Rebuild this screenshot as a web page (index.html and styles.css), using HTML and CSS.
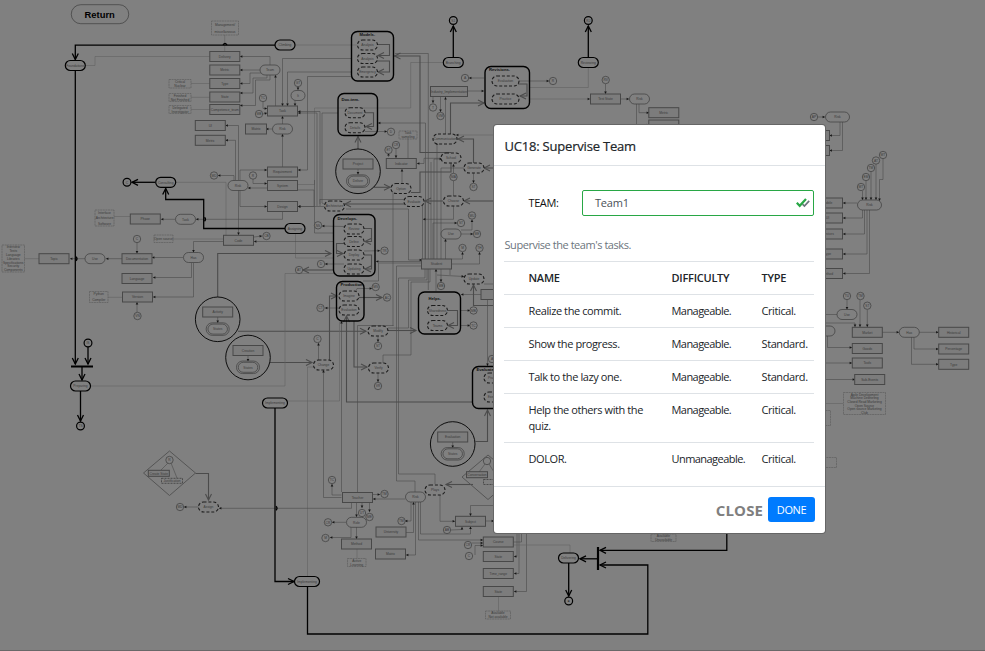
FILE: index.html
```html
<!DOCTYPE html>
<html lang="en">
<head>
<meta charset="utf-8">
<title>UC18: Supervise Team</title>
<link rel="stylesheet" href="styles.css">
</head>
<body>
<svg class="diagram" id="diagram" width="985" height="651" viewBox="0 0 985 651"></svg>
<main class="overlay">
  <section class="modal">
    <header class="modal-header"><h1>UC18: Supervise Team</h1></header>
    <div class="modal-body">
      <div class="field">
        <span class="field-label">TEAM:</span>
        <div class="field-input"><span>Team1</span>
          <svg class="checks" width="14" height="10" viewBox="0 0 14 10"><path d="M6.5 6.2 8.4 8l4.8-5.2" fill="none" stroke="#6c757d" stroke-width="1.7"/><path d="M.8 4.8 3.7 7.8 10 1" fill="none" stroke="#28a745" stroke-width="2.2"/></svg>
        </div>
      </div>
      <p class="hint">Supervise the team's tasks.</p>
      <table class="tasks">
        <colgroup><col class="col-name"><col class="col-diff"><col></colgroup>
        <thead><tr><th>NAME</th><th>DIFFICULTY</th><th>TYPE</th></tr></thead>
        <tbody>
          <tr><td>Realize the commit.</td><td>Manageable.</td><td>Critical.</td></tr>
          <tr><td>Show the progress.</td><td>Manageable.</td><td>Standard.</td></tr>
          <tr><td>Talk to the lazy one.</td><td>Manageable.</td><td>Standard.</td></tr>
          <tr><td>Help the others with the<br>quiz.</td><td>Manageable.</td><td>Critical.</td></tr>
          <tr><td>DOLOR.</td><td>Unmanageable.</td><td>Critical.</td></tr>
        </tbody>
      </table>
    </div>
    <footer class="modal-footer"><span class="close">CLOSE</span><span class="done">DONE</span></footer>
  </section>
</main>
<script src="diagram.js"></script>
</body>
</html>
```
FILE: styles.css
```css
* { box-sizing: border-box; }
body { margin: 0; width: 985px; height: 651px; overflow: hidden; background: #808080; font-family: "Open Sans", "Noto Sans", sans-serif; }
.diagram { position: absolute; left: 0; top: 0; }
.diagram text { font-family: "Liberation Sans", sans-serif; font-size: 3.3px; fill: #3a3a3a; text-anchor: middle; }
.diagram text.head { font-size: 4.2px; font-weight: bold; fill: #111; text-anchor: start; }
.diagram text.return { font-size: 9.4px; font-weight: bold; fill: #000; }
.box { fill: #7c7c7c; stroke: #484848; stroke-width: 1; }
.pill { fill: #808080; stroke: #3c3c3c; stroke-width: .7; }
.start { fill: #808080; stroke: #000; stroke-width: 1.2; }
.dash { fill: #808080; stroke: #1c1c1c; stroke-width: 1.1; stroke-dasharray: 3 1.9; }
.fine { fill: none; stroke: #333; stroke-width: .7; stroke-dasharray: 2 1; }
.note { fill: none; stroke: #595959; stroke-width: .6; stroke-dasharray: 2 .6; }
.group { fill: none; stroke: #000; stroke-width: 1.4; }
.ring { fill: none; stroke: #000; stroke-width: .9; }
.diamond { fill: none; stroke: #555; stroke-width: 1; }
.wire { fill: none; stroke: #4a4a4a; stroke-width: .6; }
.faint { fill: none; stroke: #626262; stroke-width: .6; }
.mid { fill: none; stroke: #4b4b4b; stroke-width: 1.1; }
.bold { fill: none; stroke: #000; stroke-width: 1.3; }
.tip { fill: #151515; }
.edge { fill: none; stroke: #686868; stroke-width: 1; }

.overlay { position: relative; display: flex; justify-content: flex-end; padding: 125px 160px 0 0; }
.modal { width: 331px; height: 408px; background: #fff; border-radius: 3px; box-shadow: 0 0 0 1px #666; display: flex; flex-direction: column; color: #212529; font-size: 11px; }
.modal-header { height: 41px; padding: 0 10.5px; display: flex; align-items: center; border-bottom: 1px solid #dee2e6; }
.modal-header h1 { margin: 0 0 -1px; font-size: 13px; line-height: 20px; font-weight: 400; letter-spacing: -.2px; -webkit-text-stroke: .2px #212529; }
.modal-body { height: 321px; padding: 24px 11px 0 10px; border-bottom: 1px solid #dee2e6; letter-spacing: -.4px; }
.field { display: flex; align-items: center; height: 26px; padding-left: 24.5px; }
.field-label { width: 53.5px; margin-top: -1px; color: #111; }
.field-input { flex: 1; height: 26px; display: flex; justify-content: space-between; align-items: center; border: 1px solid #28a745; border-radius: 2px; padding: 0 3px 1px 12px; color: #495057; letter-spacing: -.2px; }
.hint { margin: 21px 0 8px; line-height: 16px; color: #6c757d; padding-left: .5px; letter-spacing: -.45px; }
.tasks { width: 310px; table-layout: fixed; border-collapse: collapse; }
.col-name { width: 159px; }
.col-diff { width: 90px; }
.tasks th, .tasks td { border-top: 1px solid #dee2e6; padding: 8px 0 8px 8.5px; line-height: 16px; text-align: left; vertical-align: top; white-space: nowrap; }
.tasks td:nth-child(2) { letter-spacing: -.55px; }
.tasks th { font-weight: 600; letter-spacing: -.25px; }
.tasks th:first-child, .tasks td:first-child { padding-left: 24.5px; }
.modal-footer { flex: 1; display: flex; justify-content: flex-end; align-items: center; gap: 5px; padding: 0 10px 1px 0; }
.close { font-size: 15px; font-weight: 700; line-height: 20px; color: #7f7f7f; letter-spacing: .1px; }
.done { width: 47px; height: 25px; border-radius: 3px; background: #007bff; color: #fff; text-align: center; line-height: 25px; letter-spacing: -.4px; }
```
FILE: diagram.js
```js
const svg = document.getElementById('diagram');
const NS = 'http://www.w3.org/2000/svg';

function add(tag, attrs, text) {
  const el = document.createElementNS(NS, tag);
  for (const k in attrs) el.setAttribute(k, attrs[k]);
  if (text) el.textContent = text;
  svg.appendChild(el);
}
function label(x, y, t) { if (t) add('text', { x, y: y + 1.2 }, t); }
function rect(cls, cx, cy, w, h, rx, t) {
  add('rect', { class: cls, x: cx - w / 2, y: cy - h / 2, width: w, height: h, rx });
  label(cx, cy, t);
}

// Wire: class, end marker ('s' small, 'o' open, '' none), then x,y pairs
function wire(cls, end, ...p) {
  let d = 'M' + p[0] + ' ' + p[1];
  for (let i = 2; i < p.length; i += 2) d += 'L' + p[i] + ' ' + p[i + 1];
  add('path', { class: cls, d });
  if (!end) return;
  const n = p.length, x = p[n - 2], y = p[n - 1];
  const a = Math.atan2(y - p[n - 3], x - p[n - 4]) * 180 / Math.PI;
  const transform = `translate(${x} ${y}) rotate(${a})`;
  if (end === 's') add('path', { class: 'tip', d: 'M0 0L-2.4-1.3V1.3Z', transform });
  else add('path', { class: cls, d: 'M-6-3L0 0L-6 3', transform });
}

const wires = [
  // upper left
  'faint||224.7 35 224.7 51', 'faint||86 65.5 95 65.5 95 56.5 210 56.5', 'faint||191 83.5 210 83.5', 'faint||191 97.3 210 97.3', 'faint||191 109.5 210 109.5',
  'wire|s|270 65 270 56.5 240 56.5', 'wire|s|260 70 240 70', 'wire|s|263 73 250 73 250 83.5 240 83.5', 'wire|s|267 75 267 78 253 78 253 93 240 93', 'wire|s|270 75 270 80 255.5 80 255.5 105.5 240 105.5',
  'wire|s|275.5 106 275.5 75', 'wire|s|351 58.5 282.5 58.5 282.5 106', 'wire|s|351 72 287.5 72 287.5 106', 'wire|s|351 76.5 307.5 76.5 307.5 170 298 170',
  'faint||295 45 357 45', 'wire|s|298 87 298 90', 'wire|s|295 100 295 106', 'wire|s|263 102 263 108.5 267 108.5', 'wire|s|263 114 267 113', 'wire|s|272 129 266 129', 'wire|s|282.5 124 282.5 116', 'wire|s|282.5 167 282.5 134',
  'wire|s|238.5 180 238.5 125.5 225.5 125.5', 'wire|s|235.5 180 235.5 140.3 225.5 140.3', 'wire|s|234 181 234 175.5 218 175.5', 'wire|s|240 180 240 170 267 170', 'wire|s|267 188 248 188', 'wire|s|253 179 253 183.5 267 183.5', 'wire|s|240 190 240 206.5 267 206.5', 'faint||176 182.3 226 182.3 226 236', 'wire|s|238.5 190 238.5 235',
  'faint||114 216.5 130 216.5', 'wire|s|175 219.3 161 219.3', 'wire|s|282.5 212 282.5 219.3 196 219.3',
  // center top
  'faint||444 62.5 410.7 62.5 410.7 108 314.5 108 314.5 184.5 298 184.5', 'wire||338 113 322 113 322 203 324 204', 'wire|s|320 206 320 111.5 298 111.5', 'wire|s|317 206 317 113 298 113', 'wire||314.5 180 314.5 233 333 233', 'wire|s|324 206.5 298 206.5', 'wire|s|267 190 314 190 314 206.5 298 206.5', 'wire||320 204 319.8 199.5 405 199.5',
  'mid|o|377 44.5 389.5 44.5 389.5 55.5 378 55.5', 'mid|o|377 61 389.5 61 389.5 72 378 72', 'mid|o|365 112.7 373.5 112.7 373.5 126.5 366 126.5', 'wire|s|365 131.5 387 131.5', 'mid|o|358 149 358 136.5', 'wire|s|358 169 358 174.5',
  'mid|o|451 152.5 420 152.5 420 56 394.5 56', 'wire||428.3 290 428.3 53.5 395 53.5', 'wire|s|425.5 264 425.5 123 378 123', 'mid|o|374 187.3 390 187.3', 'wire|s|396 149 396 158', 'wire|s|388.5 157 388.5 153', 'wire||408 139 408 158', 'wire|s|402 183 402 169', 'wire|s|443 158.3 424 158.3 424 163.5 417 163.5', 'mid||411 192.5 420 192.5 420 172 451 172 451 163', 'mid|o|450.5 134 450.5 103 484 103', 'wire|s|445.5 134 445.5 97', 'wire|s|468 91 484 91', 'wire|s|484 78 469 78', 'wire|s|433 97 433 103', 'wire|s|440.5 97 440.5 112', 'mid|o|473.5 163 473.5 139 458 139', 'faint|s|494 135 456 135', 'mid|o|494 168 484 168', 'wire|s|473.5 172 473.5 183', 'wire|s|453.5 197 453.5 164', 'mid|o|494 201 464 201', 'mid|o|443 201 425 201', 'mid|o|404 204 345 204',
  'mid|o|518 84 527 84 527 96 520 96', 'wire|s|519 81 549 81', 'faint||530 87.5 588.3 87.5 588.3 67', 'faint|s|530 99 590 99', 'wire|s|605.5 84 605.5 94', 'wire|s|620 99 629 99', 'wire|s|639 104 639 112.7 649 112.7', 'wire|s|636.5 104 636.5 125 649 125',
  // cables around the student box
  'wire||422.5 259 422.5 205', 'wire||425 259 425 200', 'wire||431 259 431 162', 'wire|s|434 259 434 159 442 159', 'wire|s|437 259 437 142', 'wire||441 259 441 168 464 168', 'wire|s|346 209 408.5 209 408.5 260 422 260', 'wire||393 192 393 326', 'wire|s|453.5 206 453.5 219.3 423 219.3', 'wire||433 259 433 223', 'wire|s|433 223 457 223', 'wire|s|461 234 473 234', 'wire|s|461 230 472 230 472 219.5', 'wire|s|445.5 259 445.5 239', 'wire|s|452 259 462.5 259 462.5 252', 'wire|s|452 264 479.5 264 479.5 252', 'wire|s|422 261.5 376 261.5', 'wire|s|436 291 436 269', 'wire|s|437 275 464 276.5', 'wire|s|441 269 441 282', 'wire||430 269 430 282 411 282 411 355 383 355 383 363', 'wire||427 269 427 280 408.5 280 408.5 328 388 328', 'wire||425 269 425 278 398.5 278 398.5 474 435 474 435 484', 'wire||422 266 396.5 266 396.5 481 415 481 415 492', 'wire||363 281 378.5 281 378.5 263 422 263', 'mid|o|494 305.5 473.5 305.5 473.5 285', 'wire|s|481 294.5 461 294.5', 'wire|s|487.5 300 487.5 366', 'wire||484 284 494 284', 'wire||450 275 450 264', 'wire|s|460 310.5 470 310.5', 'wire|s|460 325.5 470 325.5', 'mid|o|448 310.5 457.5 310.5 457.5 325.5 448 325.5',
  // center column
  'faint||295.5 233 295.5 258 333 258', 'wire|s|333 241.5 254 241.5', 'mid|o|217.7 297 217.7 253.5 331 253.5', 'wire|s|254 237 262 236', 'wire|s|344 226.5 322 226', 'wire|s|344 264 325 264', 'mid|o|333 270 303 270', 'mid|o|364 228.5 371.5 228.5 371.5 241.5 365 241.5', 'mid|o|344 243.5 336.5 243.5 336.5 253.5 343 253.5', 'mid|o|364 255 371.5 255 371.5 269 365 269', 'wire|s|364 251 380 250.7', 'wire|s|356 291 357 288.5 372 288.5', 'mid|o|359 297.5 382 297.5', 'wire|s|340 308 325 308', 'mid|o|329.5 360 329.5 296 337 296', 'mid|o|238 331.3 366 331.3', 'mid|o|388 330.5 416 330.5', 'wire|s|378 336 378 342', 'wire|s|378 373 378 382', 'mid|o|354 321 354 367 367 367', 'mid|o|473 402 346.5 402 346.5 316', 'wire|s|318.5 360 318.5 343', 'mid|o|270 362.5 312 362.5', 'faint||91 386 285 386 285 273.5 334 273.5', 'wire|s|341.5 492 341.5 321', 'wire||357.5 492 357.5 325.5 393.5 325.5', 'faint||288 401 339.5 401 339.5 322', 'faint||307.5 576 307.5 367 314 367', 'wire|s|341.5 497.5 323.5 497.5 323.5 370', 'wire|s|351.5 502 351.5 508.3 219 508.3',
  // left
  'faint||24.5 258.7 39 258.7', 'wire|s|85 258.7 70 258.7', 'wire|s|122 258.7 106 258.7', 'wire|s|183 257.5 152 257.5', 'wire|s|223 241.5 193.5 241.5 193.5 252.5', 'faint||173 239 223 239', 'wire|s|137 243 137 253.5', 'wire|s|191.5 263 191.5 277.5 153 277.5', 'wire|s|193.5 263 193.5 297 153 297', 'faint||108 297.3 122 297.3', 'wire|s|137 312 137 302', 'wire|s|217.7 317 217.7 323', 'wire|s|248 355 248 361.5', 'wire|s|199 507 184 507', 'mid|o|195.5 473.5 208.5 473.5 208.5 500', 'wire||168 463 161 470', 'wire||171 463 177 478',
  // bottom center
  'wire|s|341.5 495 332 495 332 484', 'wire|s|372.5 494.5 380 494.5', 'wire|s|405 499 373 499', 'wire|s|356.5 502.5 356.5 517', 'wire|s|362 502 362 508', 'wire|s|369.5 502 369.5 512', 'wire|s|346 522.3 332 522.3', 'wire|s|351 527 351 537.5 330 537.5', 'wire|s|356.5 527 356.5 539', 'faint||357 549 357 558', 'wire|s|411 502 411 521 405 521', 'wire|s|406 532.5 413.5 532.5 413.5 502', 'wire|s|415.5 502 415.5 555 406 555', 'wire|s|418.5 502 418.5 540 483 540', 'wire|s|420.5 502 420.5 534 470.5 534 470.5 526.5', 'wire|s|440 495 440 521.3 455 521.3', 'wire|s|494 505.5 470.5 505.5 470.5 516', 'wire|s|451 530 462 529.5 462 527', 'wire|s|486 521 494 521', 'mid|o|475.5 441.5 487.5 441.5 487.5 410', 'mid|o|473 484.5 446 484.5', 'wire|s|452.7 442 452.7 448', 'wire|s|472 543 483 543', 'wire|s|475 555 475 545.5 483 545.5',
  'wire|s|517 534 517 556.5 514 556.5', 'wire|s|519 534 519 573.5 514 573.5', 'wire|s|526.5 534 526.5 591.5 514 591.5', 'wire||513 542 521.5 542 521.5 534', 'faint||514 545 570 545 570 553', 'faint||498.5 597 498.5 611',
  // right
  'wire|s|818 117 825 117', 'wire|s|840 122 840 135.5 829.5 135.5', 'wire|s|842.5 122 842.5 150.5 829.5 150.5', 'wire|s|857 203 843 203', 'wire|s|862.5 210 862.5 218 843 218', 'wire|s|864.5 210 864.5 234 843 234', 'wire|s|867 210 867 254 843 254', 'wire|s|869.5 210 869.5 273.5 843 273.5', 'wire|s|862.5 191 862.5 200', 'wire|s|866 181 866 200', 'wire|s|871 172 871 200', 'wire|s|876 164 876 200', 'wire|s|883 159 883 179.5 879.5 179.5 879.5 201',
  'wire|s|847 300 847 309.5', 'wire||825 314.5 837 314.5', 'wire|s|825 323 855 323 855 327', 'wire|s|860 300 860 327', 'wire|s|867.3 310 867.3 327', 'wire|s|827.5 336 827.5 347.5 852 347.5', 'wire|s|825 336 825 363 852 363', 'wire|s|825 379.5 855 379.5', 'wire|s|882 332.3 899 332.3', 'wire|s|919 332.3 938.5 332.3', 'wire|s|914 337 914 349 938.5 349', 'wire|s|911.5 337 911.5 364.3 938.5 364.3', 'faint||825 403.5 843 403.5',
  // main flow
  'bold|o|275 45.2 75.3 45.2 75.3 59.5', 'bold|o|75.3 71 75.3 364', 'bold|o|88 347 88 364', 'bold|o|82 367 82 380', 'bold|o|80.5 391 80.5 421', 'bold|o|285 228.5 203.7 228.5 203.7 199.5 165.7 199.5 165.7 188.5', 'bold|o|155 182.3 132 182.3', 'bold|o|453.3 57 453.3 26', 'bold|o|588.3 57 588.3 26', 'bold|o|275 408 275 581.5 294 581.5', 'bold|o|307.5 587 307.5 634 647.8 634 647.8 565 600 565', 'bold|o|726.8 533 726.8 550.3 600 550.3', 'bold|o|597 558.8 580 558.8', 'bold|o|568.7 563 568.7 596'
];
for (const w of wires) {
  const [cls, end, pts] = w.split('|');
  wire(cls, end, ...pts.split(' ').map(Number));
}
add('path', { d: 'M71 366.5H93M598 547V570', stroke: '#000', 'stroke-width': 2.2 });
for (const [x, y] of [[76, 258.7], [204.5, 219.3], [276, 508.3]]) add('path', { class: 'bold', d: `M${x} ${y - 2}q2 2 0 4` });
add('path', { class: 'bold', d: 'M223 45q2-3 4 0' });

// Dotted notes: x, y, w, h, lines
for (const [x, y, w, h, ...lines] of [
  [211.5, 21, 27, 14, 'Management/', 'miscellaneous'], [169, 79.5, 22, 8.5, 'Critical', 'Nuclear'], [169, 93.5, 22, 8, 'Finished', 'Not Finished'], [169, 105.5, 22, 8, 'Delegated', 'Investigator'],
  [95, 210, 19, 16, 'Interface', 'Architecture', 'Software'], [154, 235, 19, 7.5, 'Open source'], [2, 245, 22.5, 27, 'Interview', 'Tests', 'Language', 'Libraries', 'Specifications', 'Security', 'Components'], [89.5, 291.5, 18.5, 11, 'Python', 'Compiler'],
  [399, 131, 18, 8, 'Task', 'sampling'], [347.5, 558.5, 18.5, 8, 'Active', 'Learning'], [485.5, 611, 25, 8, 'Available', 'Not available'], [651, 534, 25, 7.5, 'Available', 'Unavailable'],
  [843.5, 392.5, 42, 22, 'Agile Development', 'Machine Debriefing', 'Closed Read Marketing', 'Open Source', 'Open source Marketing', 'Club'], [810, 410.5, 20.5, 15, '', ''], [816, 457.5, 20.5, 10, '', '']
]) {
  add('rect', { class: 'note', x, y, width: w, height: h });
  lines.forEach((t, i) => label(x + w / 2, y + h * (i + .5) / lines.length, t));
}

// Entity boxes: cx, cy, label, width
for (const [x, y, t, w = 30] of [
  [224.8, 56.5, 'Delivery'], [224.8, 70, 'Metric'], [224.8, 83.5, 'Type'], [224.8, 97, 'State'], [224.8, 109.5, 'Competence_team'], [210.3, 125.5, 'UI'], [210.3, 140.3, 'Metric'], [256, 129, 'Matrix', 21],
  [145.3, 219, 'Phase'], [282.5, 111, 'Task'], [282.5, 172, 'Requirement'], [282.5, 185.5, 'System'], [282.5, 206.5, 'Design'], [358, 164, 'Project'], [401.3, 163.5, 'Indicator'], [449, 91.5, 'Industry_Implementation', 37],
  [605.5, 99, 'Test State'], [663.8, 112.7, 'Metric'], [663.8, 125, ''], [54, 258.7, 'Topic'], [137, 258.7, 'Documentation'], [238.5, 240.3, 'Code'], [137, 278.5, 'Language'], [137.5, 297, 'Version'],
  [217.7, 312, 'Activity'], [248, 350.5, 'Creation'], [436.5, 264, 'Student'], [496, 294.5, ''], [357.5, 497.5, 'Teacher'], [356.5, 544, 'Method'], [391, 532, 'University'], [390.5, 554, 'Matrix'], [470.5, 521.3, 'Subject'], [452.7, 437, 'Evaluation'],
  [498.3, 542, 'Course'], [498.3, 556.5, 'State'], [498.3, 573.5, 'Time_range'], [498.3, 591.5, 'State'], [814.5, 135.5, ''], [814.5, 150.5, ''], [827.5, 203, 'Mobile'], [827.5, 218, 'UI'], [827.5, 234, 'Services'], [827.5, 254, 'Type'], [827.5, 273.5, 'Method'],
  [867.3, 332.3, 'Market'], [867.3, 348.5, 'Goods'], [867.3, 363, 'Tools'], [869.7, 379.5, 'Sub-Events'], [953.7, 332.3, 'Historical'], [953.7, 349, 'Percentage'], [953.7, 364.3, 'Type']
]) rect('box', x, y, w, 10, 0, t);

// Plain pills
for (const [x, y, t, w = 20] of [
  [238, 185.5, 'Risk'], [185.5, 219.3, 'Task'], [270, 70, 'Team'], [298, 95.5, 'It', 14], [282.5, 129, 'Risk'], [639.5, 99, 'Risk'], [95, 258.7, 'Use'], [193.5, 257.5, 'Has'], [451, 234, 'Use'], [415.5, 497, 'Risk'], [356.5, 522.3, 'Role'],
  [837.5, 117, 'Risk', 24], [869.5, 205, 'Risk', 24], [847, 314.5, 'Use'], [825, 331, ''], [909.3, 332.3, 'Has']
]) rect('pill', x, y, w, 10, 5, t);

// Dashed activities
for (const [x, y, t, w = 20] of [
  [367.5, 45, 'Analysis'], [367.5, 58.5, 'Analysis'], [367.5, 72, 'Emergency'], [355, 112.7, 'Document'], [355, 127.7, 'Details'], [505.5, 81, 'Evaluation', 27], [505.5, 99, 'Practice', 27],
  [445, 139, 'Communication', 24], [451, 158, 'School'], [474, 168, 'Generate'], [401, 188.5, 'Option'], [414, 201.5, 'Evaluate'], [453.5, 201, 'Choose'], [334.5, 206, 'Architecture'],
  [354, 229, 'Review'], [354, 241.5, 'Define'], [354, 255, 'Deploy'], [354, 269, 'Updating'], [349, 296, 'Imagine'], [349, 310, 'Evaluation'], [378, 331, 'Modify'], [378.5, 368, 'Verify'], [323.5, 365, 'Change'], [474, 279, 'Update'],
  [437.5, 310.5, 'Sharedness'], [437.5, 325.5, 'Teams'], [494, 378, 'Practice'], [494, 397, 'Exercise'], [435, 490, 'Plays'], [208.5, 507, 'Assign']
]) rect('dash', x, y, w, 10, 5, t);

// Main flow steps
for (const [x, y, t, w = 20] of [
  [75.3, 65.5, 'Foundations'], [285, 45, 'Climbing'], [165.7, 182.3, 'Consulting'], [453.3, 62.5, 'Branching'], [588.3, 62.5, 'Reviewing'], [295, 228.5, 'Assigning'], [80.5, 386, 'Preparing'], [275, 403, 'Implementing', 25], [307, 581.5, 'Implementing', 25], [568.5, 558, 'Delivering']
]) rect('start', x, y, w, 10, 5, t);

// Reference circles
for (const [x, y, t] of [
  [214, 175.5, 'MD'], [298, 83, 'GT'], [263, 98, 'TC'], [259, 114, 'MB'], [253, 175.5, 'R'], [391, 131.8, 'D'], [396, 145, 'CR'], [388.5, 150, 'ET'], [453.5, 177, 'MA'], [473.5, 187, 'ST'], [433, 107.5, 'T'], [440.5, 116, 'VM'], [465, 78, 'A'], [553, 81, 'R'], [605.7, 80, 'RV'],
  [137, 239, 'C'], [137.5, 316, 'VN'], [266.5, 236, 'CB'], [318, 225.3, 'NS'], [384.5, 250.7, 'TR'], [321, 264, 'D'], [299, 270, 'AT'], [375.7, 287, 'MS'], [387, 297.5, 'AC'], [320.5, 308, 'CT'], [317.5, 339, 'C'], [378, 346, 'ST'], [378, 386, 'VR'],
  [472, 215.5, 'MU'], [461, 223, 'ST'], [477, 234, 'ME'], [462.5, 248, 'M'], [479.5, 248, 'TH'], [441, 286, 'MB'], [473.5, 310.5, 'MB'], [473.5, 325.5, 'TC'], [492, 359, 'A'], [332, 480, 'TC'], [384.5, 494, 'TM'], [362, 513, 'UT'], [369.5, 517, 'ME'], [328, 522.3, 'CR'], [325.5, 538, 'M'],
  [401.5, 521, 'TM'], [447, 530, 'AB'], [468, 545, 'CR'], [469, 556, 'C'], [180, 507, 'MD'], [814, 117, 'AP'], [883, 155, 'MT'], [876, 160.5, 'AT'], [871, 168, 'TM'], [866, 177, 'EM'], [861, 187, 'MT'], [847, 296, 'TU'], [860.5, 296, 'TM'], [867.3, 305.7, 'ST'], [169.5, 460, 'R']
]) { add('circle', { class: 'pill', cx: x, cy: y, r: 3.7 }); label(x, y, t); }
for (const [x, y, t] of [[127, 182.3, 'C'], [453.3, 20.5, 'S1'], [588.3, 20.5, 'RJ'], [88, 343, 'IS'], [80.5, 426, 'TS'], [568.7, 601, '■']]) {
  add('circle', { class: 'start', cx: x, cy: y, r: 3.9 }); label(x, y, t);
}

// Grouped activities: x, y, w, h, title, title offset
for (const [x, y, w, h, t, dx, dy] of [[351.5, 31.5, 42, 49.5, 'Models.', 8, 4.8], [338, 93.5, 39.5, 42, 'Doc.tem.', 3.5, 7.5], [485, 66.5, 44.5, 42, 'Revisions.', 4, 4.8], [333.5, 214.5, 41.5, 61.5, 'Develops.', 4, 5.3], [336.5, 281.5, 27.5, 39.5, 'Production', 4, 4.8], [418.5, 292, 42, 42, 'Helps.', 10, 7.5], [472.5, 366.5, 44, 42, 'Evaluates.', 4, 4.8]]) {
  add('rect', { class: 'group', x, y, width: w, height: h, rx: 6 });
  add('text', { class: 'head', x: x + dx, y: y + dy }, t);
}
for (const [x, y, t] of [[358, 171.3, 'Deliver'], [217.7, 319.3, 'States'], [248, 357.5, 'States'], [452.7, 444, 'States']]) {
  add('circle', { class: 'ring', cx: x, cy: y, r: 22.3 });
  rect('pill', x, y + 9.8, 23, 12.5, 6, '');
  rect('pill', x, y + 9.8, 19.5, 10, 5, t);
}
for (const [x, y] of [[169.5, 473], [488, 477]]) add('path', { class: 'diamond', d: `M${x} ${y - 22}l26 22l-26 22.5l-26-22.5z` });
rect('box', 158.8, 473.3, 21, 6, 0, 'Create State');
rect('fine', 172, 480.8, 21, 5, 0, 'Justification');
rect('box', 477, 474.7, 21, 6, 0, 'Conversation');
rect('fine', 494, 482, 21, 5, 0, '');
add('circle', { class: 'pill', cx: 487, cy: 461, r: 3.7 });
add('path', { class: 'wire', d: 'M485 464L479 472M489 464L494 472' });

rect('pill', 100, 14.2, 57.5, 19, 9.5, '');
add('text', { class: 'return', x: 99.7, y: 17.5 }, 'Return');
add('path', { class: 'edge', d: 'M0 650.5H985' });
```
